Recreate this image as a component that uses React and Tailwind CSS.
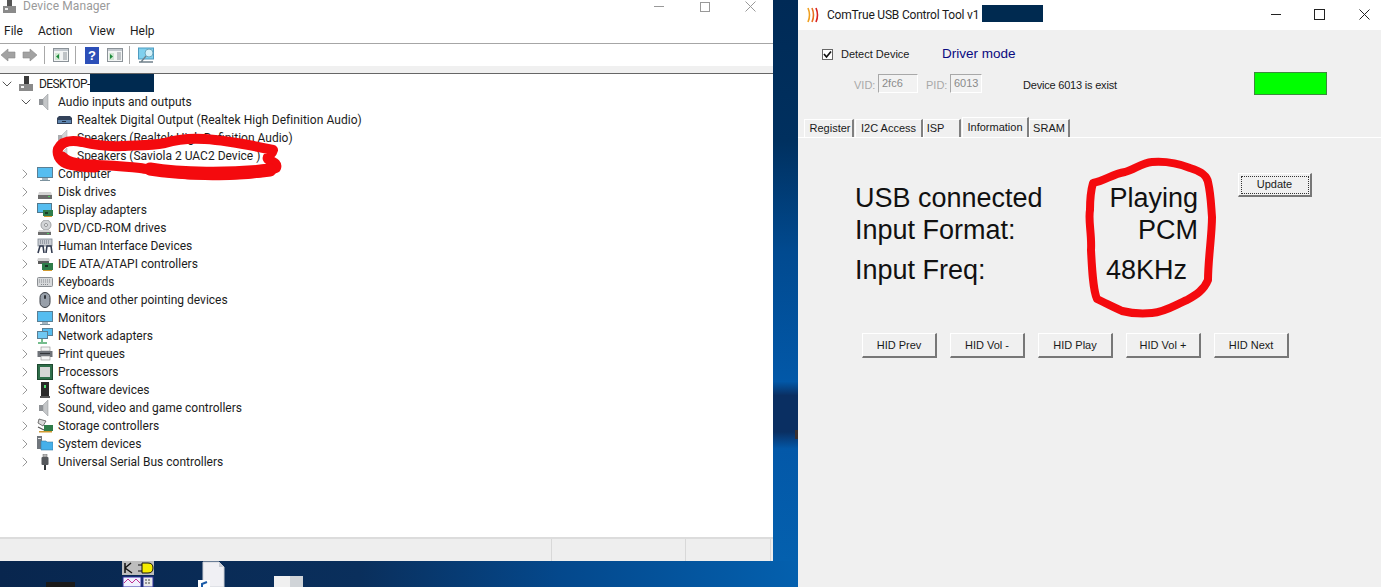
import { ChevronDown, ChevronRight } from 'lucide-react';

// ── Tree data ────────────────────────────────────────────────────────────────

const categories = [
  'computer', 'disk', 'display', 'dvd', 'hid', 'ide', 'keyboard', 'mouse', 'monitor',
  'network', 'printer', 'cpu', 'software', 'speaker', 'storage', 'system', 'usb',
];

const labels = {
  computer: 'Computer',
  disk: 'Disk drives',
  display: 'Display adapters',
  dvd: 'DVD/CD-ROM drives',
  hid: 'Human Interface Devices',
  ide: 'IDE ATA/ATAPI controllers',
  keyboard: 'Keyboards',
  mouse: 'Mice and other pointing devices',
  monitor: 'Monitors',
  network: 'Network adapters',
  printer: 'Print queues',
  cpu: 'Processors',
  software: 'Software devices',
  speaker: 'Sound, video and game controllers',
  storage: 'Storage controllers',
  system: 'System devices',
  usb: 'Universal Serial Bus controllers',
};

const hidButtons = ['HID Prev', 'HID Vol -', 'HID Play', 'HID Vol +', 'HID Next'];

// ── Icons ────────────────────────────────────────────────────────────────────

function TreeIcon({ name }) {
  return (
    <svg width="16" height="16" viewBox="0 0 16 16" className="shrink-0">
      {name === 'host' && (
        <g>
          <rect x="6" y="0" width="5" height="8" fill="#3a3a3a" />
          <rect x="1" y="8" width="14" height="7" fill="#8a8a8a" />
          <rect x="3" y="10" width="3" height="2" fill="#f4f4f4" />
        </g>
      )}
      {(name === 'speaker' || name === 'speakerFaded') && (
        <g opacity={name === 'speakerFaded' ? 0.75 : 1}>
          <rect x="2" y="5" width="4" height="6" fill="#8f9296" />
          <path d="M6 5 L11 0 V16 L6 11 Z" fill="#c4c6c8" stroke="#8f9296" strokeWidth="0.5" />
        </g>
      )}
      {name === 'digital' && (
        <g>
          <path d="M1 6 L3 4 H14 L16 6 V12 H1 Z" fill="#33425a" />
          <rect x="2" y="8" width="13" height="3" fill="#5f86b0" />
          <rect x="6" y="9" width="4" height="1" fill="#1f2c40" />
        </g>
      )}
      {(name === 'computer' || name === 'monitor') && (
        <g>
          <rect x="0.5" y="1.5" width="15" height="10" fill="#55bdf0" stroke="#5a7f94" />
          <rect x="5" y="12" width="6" height="2" fill="#a4b6c0" />
          <rect x="3" y="14" width="10" height="1" fill="#7c929e" />
        </g>
      )}
      {name === 'disk' && (
        <g>
          <path d="M2 8 H14 L15 11 H1 Z" fill="#d4d4d4" />
          <rect x="1" y="11" width="14" height="4" fill="#6c6c6c" />
          <rect x="11" y="12" width="2" height="1" fill="#50d060" />
        </g>
      )}
      {name === 'display' && (
        <g>
          <rect x="0.5" y="1.5" width="14" height="9" fill="#55bdf0" stroke="#52788c" />
          <rect x="6" y="8" width="10" height="6" fill="#2f7d4a" />
          <rect x="7" y="14" width="8" height="1" fill="#d09a30" />
          <rect x="8" y="10" width="3" height="2" fill="#1d3d28" />
        </g>
      )}
      {name === 'dvd' && (
        <g>
          <circle cx="9" cy="5" r="5" fill="#d2d4d6" stroke="#a0a2a4" />
          <circle cx="9" cy="5" r="1.5" fill="#fff" stroke="#909294" />
          <path d="M2 10 H13 L14 12 H1 Z" fill="#d4d4d4" />
          <rect x="1" y="12" width="13" height="3" fill="#6c6c6c" />
          <rect x="10" y="13" width="2" height="1" fill="#50d060" />
        </g>
      )}
      {name === 'hid' && (
        <g>
          <rect x="1" y="1" width="14" height="7" fill="#c8ccd2" stroke="#7d8590" strokeWidth="0.8" />
          <path d="M3 3 H13 M3 5 H13" stroke="#6a7280" strokeDasharray="1 1" />
          <path d="M1 15 L3 8 L6 8 L7 15 M9 15 L10 8 L14 8 L15 15" fill="none" stroke="#333c50" strokeWidth="1.6" />
        </g>
      )}
      {name === 'ide' && (
        <g>
          <path d="M1 2 H12 L13 5 H0 Z" fill="#d4d4d4" />
          <rect x="1" y="5" width="11" height="3" fill="#5c5c5c" />
          <rect x="5" y="7" width="11" height="7" fill="#2f7d4a" />
          <rect x="6" y="14" width="9" height="1" fill="#d09a30" />
          <rect x="8" y="9" width="3" height="2" fill="#173024" />
        </g>
      )}
      {name === 'keyboard' && (
        <g>
          <rect x="0.5" y="3.5" width="15" height="9" rx="1" fill="#d6d8da" stroke="#8a8e92" />
          <path d="M2 6 H14 M2 8 H14 M4 10.5 H12" stroke="#85898e" strokeDasharray="1 1" />
        </g>
      )}
      {name === 'mouse' && (
        <g>
          <rect x="3" y="0.5" width="10" height="15" rx="5" fill="#98a0aa" stroke="#3a3f46" />
          <rect x="7" y="3" width="2" height="4" rx="1" fill="#30343a" />
        </g>
      )}
      {name === 'network' && (
        <g>
          <rect x="5.5" y="0.5" width="10" height="7" fill="#55bdf0" stroke="#5a7f94" />
          <rect x="0.5" y="3.5" width="10" height="7" fill="#6fc8f2" stroke="#5a7f94" />
          <path d="M5 11 V14 M1 15 H10" stroke="#48a868" strokeWidth="1.5" />
        </g>
      )}
      {name === 'printer' && (
        <g>
          <rect x="4" y="1" width="9" height="4" fill="#f4f4f4" stroke="#8a8a8a" strokeWidth="0.6" />
          <rect x="0.5" y="5" width="15" height="6" fill="#6e7278" />
          <rect x="3" y="7" width="10" height="1" fill="#33363a" />
          <rect x="4" y="10" width="9" height="4" fill="#f6f6f6" stroke="#8a8a8a" strokeWidth="0.6" />
        </g>
      )}
      {name === 'cpu' && (
        <g>
          <rect x="0.5" y="0.5" width="15" height="15" fill="#2f6e4a" stroke="#1d4a30" />
          <rect x="3" y="3" width="10" height="10" fill="#d6d6d6" />
        </g>
      )}
      {name === 'software' && (
        <g>
          <rect x="4" y="0" width="8" height="14" fill="#2a2a2a" />
          <rect x="7" y="3" width="2" height="3" fill="#50e070" />
          <rect x="3" y="14" width="10" height="2" fill="#555" />
        </g>
      )}
      {name === 'storage' && (
        <g>
          <path d="M2 1 L9 3 L6 8 L1 5 Z" fill="#d8d8d8" stroke="#555" strokeWidth="0.8" />
          <path d="M1 9 L7 12" stroke="#555" strokeWidth="1.2" />
          <rect x="7" y="7" width="9" height="6" fill="#2f7d4a" />
          <rect x="2" y="13" width="13" height="1.5" fill="#d09a30" />
        </g>
      )}
      {name === 'system' && (
        <g>
          <rect x="0" y="0" width="5" height="13" fill="#70767c" />
          <rect x="1" y="2" width="3" height="1" fill="#e8e8e8" />
          <path d="M4 5 H9 L10 6 H16 V14 H4 Z" fill="#45b0ea" stroke="#3b7ea6" strokeWidth="0.6" />
        </g>
      )}
      {name === 'usb' && (
        <g>
          <rect x="6" y="0" width="4" height="3" fill="#b8b8b8" stroke="#666" strokeWidth="0.5" />
          <rect x="4.5" y="3" width="7" height="8" rx="1" fill="#55585c" />
          <rect x="7" y="11" width="2" height="5" fill="#33363a" />
        </g>
      )}
    </svg>
  );
}

function TreeRow({ depth, expanded, leaf, icon, children }) {
  const pad = depth === 0 ? 'pl-[1px]' : depth === 1 ? 'pl-[20px]' : 'pl-[39px]';
  return (
    <div className={`flex items-center h-[18px] gap-[5px] ${pad}`}>
      <span className="flex items-center w-[10px] mr-[2px] shrink-0">
        {!leaf && (expanded
          ? <ChevronDown size={16} strokeWidth={1.5} className="text-[#555] -ml-[2px] shrink-0" />
          : <ChevronRight size={16} strokeWidth={1.5} className="text-[#999] -ml-[3px] shrink-0" />)}
      </span>
      <TreeIcon name={icon} />
      <span className="whitespace-nowrap">{children}</span>
    </div>
  );
}

function ToolbarIcon({ accent }) {
  return (
    <svg width="16" height="16" viewBox="0 0 16 16">
      <rect x="0.5" y="1.5" width="15" height="13" fill="#f2f4f4" stroke="#8b9298" />
      <rect x="1" y="2" width="14" height="2" fill="#c2c8ce" />
      <rect x="2" y="6" width="5" height="7" fill="#cfe6d2" />
      <path d={accent} fill="#1c8a3a" />
      <path d="M10 6 H14 M10 8 H14 M10 10 H14 M10 12 H14" stroke="#8b9298" />
    </svg>
  );
}

function ArrowIcon({ flip }) {
  return (
    <svg width="16" height="14" viewBox="0 0 16 14" className={flip ? '-scale-x-100' : ''}>
      <path d="M8 1 L1 7 L8 13 V10 H15 V4 H8 Z" fill="#a2a2a2" stroke="#8a8a8a" strokeWidth="0.6" />
    </svg>
  );
}

function Separator() {
  return <span className="w-px h-[18px] ml-[6px] bg-[#a8a8a8]" />;
}

function WinButton({ className, children }) {
  return (
    <button className={`flex items-center justify-center bg-[#f0f0f0] text-[11px] text-[#1a1a1a] border border-t-white border-l-white border-r-[#777] border-b-[#777] border-r-2 border-b-2 ${className}`}>
      {children}
    </button>
  );
}

function Tab({ label, className }) {
  return (
    <div className={`flex items-center justify-center h-[18px] border-r-2 border-r-[#808080] border-t border-l border-t-white border-l-white ${className}`}>
      {label}
    </div>
  );
}

// ── Page ─────────────────────────────────────────────────────────────────────

export default function App() {
  return (
    <div className="relative flex w-[1381px] h-[587px] overflow-hidden bg-[#f0f0f0]">

      {/* ── Device Manager + desktop ── */}
      <div className="flex flex-col w-[798px] shrink-0">
        <div className="flex h-[561px]">
          <div className="flex flex-col w-[773px] bg-white font-['Roboto',sans-serif] text-[12px] text-[#1c1c1c]">

            {/* Title */}
            <div className="flex items-center h-[13px] pl-[3px] leading-[13px]">
              <svg width="14" height="13" viewBox="0 0 14 13" className="shrink-0">
                <rect x="4" y="0" width="5" height="6" fill="#555" />
                <rect x="0" y="6" width="13" height="7" fill="#8a8a8a" />
                <rect x="2" y="8" width="3" height="2" fill="#eee" />
              </svg>
              <span className="ml-[6px] text-[#9a9a9a] tracking-[0.1px]">Device Manager</span>
              <div className="flex items-center ml-auto">
                <span className="w-[10px] h-px bg-[#999] mr-[36px]" />
                <span className="w-[10px] h-[10px] border border-[#999] mr-[35px]" />
                <svg width="11" height="11" viewBox="0 0 11 11" className="mr-[17px]">
                  <path d="M0.5 0.5 L10.5 10.5 M10.5 0.5 L0.5 10.5" stroke="#999" />
                </svg>
              </div>
            </div>

            {/* Menu */}
            <div className="flex items-center h-[31px] pt-[6px] pl-[4px] border-b border-[#a6a6a6]">
              <span className="w-[34px]">File</span>
              <span className="w-[51px]">Action</span>
              <span className="w-[41px]">View</span>
              <span>Help</span>
            </div>

            {/* Toolbar */}
            <div className="flex items-center h-[22px]">
              <ArrowIcon />
              <span className="ml-[6px] flex"><ArrowIcon flip /></span>
              <Separator />
              <span className="ml-[8px] flex"><ToolbarIcon accent="M6 7 L3 9.5 L6 12 Z" /></span>
              <Separator />
              <svg width="14" height="17" viewBox="0 0 14 17" className="ml-[9px]">
                <rect x="0" y="0" width="14" height="17" fill="#2c4fb8" />
                <text x="7" y="13" textAnchor="middle" fontSize="13" fontWeight="700" fill="#fff" fontFamily="Liberation Sans">?</text>
              </svg>
              <span className="ml-[8px] flex"><ToolbarIcon accent="M3 7 L6 9.5 L3 12 Z" /></span>
              <Separator />
              <svg width="17" height="17" viewBox="0 0 17 17" className="ml-[8px]">
                <rect x="0.5" y="1" width="15" height="11" fill="#7fd0ee" stroke="#4f9cc0" />
                <circle cx="11" cy="6" r="4" fill="#d4f0f8" stroke="#6aa8c0" />
                <path d="M8 9 L3 15 M1 15 H15" stroke="#70808a" strokeWidth="1.3" />
              </svg>
            </div>
            <div className="h-[7px] bg-[#f0f0f0]" />
            <div className="h-px bg-[#666]" />

            {/* Tree */}
            <div className="flex-1 pt-px overflow-hidden">
              <TreeRow depth={0} expanded icon="host">
                <span className="flex items-center tracking-[-0.6px]">
                  DESKTOP-
                  <span className="inline-block w-[64px] h-[19px] -mt-[3px] bg-[#002a50]" />
                </span>
              </TreeRow>
              <TreeRow depth={1} expanded icon="speaker">Audio inputs and outputs</TreeRow>
              <TreeRow depth={2} leaf icon="digital"><span className="tracking-[0.05px]">Realtek Digital Output (Realtek High Definition Audio)</span></TreeRow>
              <TreeRow depth={2} leaf icon="speakerFaded">Speakers (Realtek High Definition Audio)</TreeRow>
              <TreeRow depth={2} leaf icon="speakerFaded">Speakers (Saviola 2 UAC2 Device )</TreeRow>
              {categories.map(c => (
                <TreeRow key={c} depth={1} icon={c}>{labels[c]}</TreeRow>
              ))}
            </div>

            {/* Status bar */}
            <div className="flex h-[24px] bg-[#eeeeee] border-t-2 border-[#dcdcdc]">
              <div className="w-[552px] border-r border-[#d8d8d8]" />
              <div className="w-[133px] border-r border-[#d8d8d8] ml-[1px]" />
              <div className="w-[85px] border-r border-[#d8d8d8]" />
            </div>
          </div>

          {/* Wallpaper between the windows */}
          <div className="relative flex-1 bg-[linear-gradient(180deg,#002a56_0%,#00305f_25%,#014a90_45%,#0258a8_68%,#0a2f62_70.5%,#0a2f62_77%,#0358a8_80%,#0460ae_100%)]">
            <span className="absolute right-0 top-[430px] w-[3px] h-[9px] bg-[#3a3030]" />
          </div>
        </div>

        {/* Desktop strip */}
        <div className="relative flex-1 bg-[linear-gradient(90deg,#08264e_0%,#0a2f5c_45%,#04488c_70%,#0460ae_100%)]">
          <div className="absolute left-[46px] top-[21px] w-[29px] h-[5px] bg-[#1a1a1a]" />
          <svg width="33" height="26" viewBox="0 0 33 26" className="absolute left-[122px] top-0">
            <rect x="0" y="0" width="32" height="14" fill="#bdbdbd" />
            <path d="M3 2 V12 M3 7 L9 2 M3 7 L10 12" stroke="#111" strokeWidth="1.5" fill="none" />
            <path d="M20 2 H26 Q31 2 31 7 Q31 12 26 12 H20 Z" fill="#f5ec00" stroke="#111" />
            <path d="M16 4 H20 M16 10 H20" stroke="#111" />
            <rect x="1" y="16" width="18" height="10" fill="#f0f0ff" stroke="#3030a0" />
            <path d="M2 22 L6 18 L10 22 L14 18 L18 22" stroke="#c03090" fill="none" />
            <rect x="21" y="16" width="10" height="10" fill="#e8e8e8" stroke="#3030a0" />
            <path d="M23 19 H29 M23 22 H29" stroke="#444" strokeDasharray="2 1" />
          </svg>
          <svg width="28" height="26" viewBox="0 0 28 26" className="absolute left-[198px] top-0">
            <path d="M5 1 H21 L26 6 V26 H5 Z" fill="#f0f0f4" stroke="#cfd2d8" />
            <path d="M21 1 V6 H26" fill="#c8ccd4" />
            <rect x="0" y="19" width="12" height="7" fill="#fff" />
            <path d="M4 26 V23 L9 21" stroke="#1c5ca8" strokeWidth="2" fill="none" />
          </svg>
          <div className="absolute left-[274px] top-[15px] flex h-[11px]">
            <div className="w-[16px] bg-[#f0f0f0]" />
            <div className="w-[13px] bg-[#d0d4d8]" />
          </div>
        </div>
      </div>

      {/* ── ComTrue tool ── */}
      <div className="flex flex-col flex-1 font-['Liberation_Sans',sans-serif] text-[11px] text-[#1a1a1a]">

        {/* Title */}
        <div className="flex items-center h-[30px] bg-white pl-[9px] shrink-0">
          <svg width="14" height="16" viewBox="0 0 14 16" className="shrink-0 mb-[1px]">
            <path d="M1 1 Q4 8 1 15" stroke="#f0a020" strokeWidth="1.6" fill="none" />
            <path d="M5 1 Q8 8 5 15" stroke="#e87020" strokeWidth="1.6" fill="none" />
            <path d="M9 1 Q12 8 9 15" stroke="#d82020" strokeWidth="1.6" fill="none" />
          </svg>
          <span className="ml-[6px] text-[12px] font-['Roboto',sans-serif] tracking-[-0.2px] whitespace-nowrap mb-[1px]">ComTrue USB Control Tool v1</span>
          <span className="w-[61px] h-[17px] ml-[3px] mb-[3px] bg-[#002a50]" />
          <div className="flex items-center ml-auto mr-[11px] mb-[2px]">
            <span className="w-[10px] h-px bg-[#222] mr-[33px]" />
            <span className="w-[11px] h-[11px] border border-[#222] mr-[34px]" />
            <svg width="11" height="11" viewBox="0 0 11 11">
              <path d="M0.5 0.5 L10.5 10.5 M10.5 0.5 L0.5 10.5" stroke="#222" />
            </svg>
          </div>
        </div>

        {/* Detect row */}
        <div className="flex items-center h-[18px] mt-[15px] pl-[24px]">
          <span className="flex items-center justify-center w-[11px] h-[11px] bg-white border border-[#666]">
            <svg width="9" height="9" viewBox="0 0 9 9">
              <path d="M1 4 L3.5 7 L8 1.5" stroke="#111" strokeWidth="1.7" fill="none" />
            </svg>
          </span>
          <span className="ml-[8px] w-[101px]">Detect Device</span>
          <span className="text-[13.5px] text-[#0a0a80] mt-[1px]">Driver mode</span>
        </div>

        {/* VID / PID row */}
        <div className="flex items-center h-[24px] mt-[8px] pl-[56px]">
          <span className="text-[#a8a8a8] w-[24px] mt-[4px]">VID:</span>
          <span className="flex items-center w-[40px] h-[19px] pl-[3px] border border-[#a8a8a8] border-r-white border-b-white text-[#8a8a8a] bg-[#f2f2f2]">2fc6</span>
          <span className="text-[#a8a8a8] w-[24px] ml-[8px] mt-[4px]">PID:</span>
          <span className="flex items-center w-[32px] h-[19px] pl-[3px] border border-[#a8a8a8] border-r-white border-b-white text-[#8a8a8a] bg-[#f2f2f2]">6013</span>
          <span className="ml-[41px] w-[231px] whitespace-nowrap tracking-[-0.2px] mt-[4px]">Device 6013 is exist</span>
          <span className="w-[73px] h-[23px] bg-[#00ff00] border border-[#3c8c3c]" />
        </div>

        {/* Tabs */}
        <div className="flex items-end h-[21px] mt-[22px] pl-[6px] border-b border-white">
          <Tab label="Register" className="w-[50px] pl-[3px]" />
          <Tab label="I2C Access" className="w-[68px] ml-px" />
          <Tab label="ISP" className="w-[38px] pr-[12px]" />
          <Tab label="Information" className="w-[67px] h-[20px] ml-[1px]" />
          <Tab label="SRAM" className="w-[41px]" />
        </div>

        {/* Information panel */}
        <div className="flex items-start pt-[44px] pl-[57px]">
          <div className="w-[343px] text-[27px] leading-[32px] text-[#111]">
            <div className="flex justify-between"><span>USB connected</span><span>Playing</span></div>
            <div className="flex justify-between"><span>Input Format:</span><span>PCM</span></div>
            <div className="flex justify-between pr-[11px] mt-[8px]"><span>Input Freq:</span><span>48KHz</span></div>
          </div>
          <WinButton className="w-[74px] h-[24px] ml-[40px] -mt-[9px]">
            <span className="flex items-center justify-center w-[68px] h-[18px] border border-dotted border-[#333]">Update</span>
          </WinButton>
        </div>

        <div className="flex gap-[13px] mt-[47px] pl-[64px]">
          {hidButtons.map(label => (
            <WinButton key={label} className="w-[75px] h-[25px]">{label}</WinButton>
          ))}
        </div>
      </div>

      {/* ── Red marker scribbles ── */}
      <svg width="1381" height="587" viewBox="0 0 1381 587" className="absolute left-0 top-0 pointer-events-none">
        <path
          d="M58 149 C62 141 72 140 82 142 C95 145 108 147 122 146 C138 145 148 146 165 143 C178 139 190 138 205 139 C222 140 250 145 273 150 C272 155 266 156 268 159 C272 162 278 163 276 168 C262 174 240 176 205 175 C180 175 160 171 140 168 C120 166 110 165 95 165 C80 165 68 167 62 161 C58 157 57 153 58 149 Z"
          fill="none"
          stroke="#f40a0e"
          strokeWidth="10"
          strokeLinejoin="round"
        />
        <path d="M150 169 C180 174 230 175 270 170" fill="none" stroke="#f40a0e" strokeWidth="13" strokeLinecap="round" />
        <path d="M62 158 C68 164 80 166 95 166" fill="none" stroke="#f40a0e" strokeWidth="13" strokeLinecap="round" />
        <path
          d="M1093 183 C1105 181 1112 174 1125 172 C1135 169 1142 163 1152 162 C1165 161 1180 164 1190 168 C1200 171 1207 175 1208 182 C1211 195 1211 205 1212 217 C1212 235 1208 260 1208 280 C1204 290 1196 295 1187 300 C1175 305 1165 312 1152 313 C1140 314 1130 313 1122 311 C1112 306 1105 303 1097 299 C1093 290 1092 270 1091 250 C1092 235 1088 220 1090 210 C1090 200 1091 190 1093 183 Z"
          fill="none"
          stroke="#f40a0e"
          strokeWidth="8"
          strokeLinejoin="round"
        />
      </svg>
    </div>
  );
}
